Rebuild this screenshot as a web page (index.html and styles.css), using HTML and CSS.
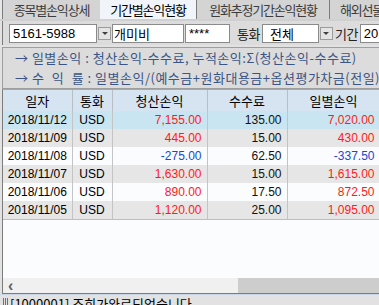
FILE: index.html
```html
<html>
<head>
  <title>기간별손익현황</title>
  <link rel="stylesheet" href="styles.css">
</head>
<body>
  <div class="tabs">
    <div class="tab tab1">종목별손익상세</div>
    <div class="tab active">기간별손익현황</div>
    <div class="tab tab3">원화추정기간손익현황</div>
    <div class="tab tab4">해외선물옵션</div>
  </div>

  <div class="controls">
    <div class="field acct">5161-5988</div>
    <div class="combo-btn"><span class="tri"></span></div>
    <div class="field name">개미비</div>
    <div class="field pw">****</div>
    <span class="label lbl-cur">통화</span>
    <div class="field cur">전체</div>
    <div class="combo-btn"><span class="tri"></span></div>
    <span class="label lbl-date">기간</span>
    <div class="field date">2018/11/05</div>
  </div>

  <div class="formula">
    <div class="line">→ 일별손익 : 청산손익-수수료, 누적손익:Σ(청산손익-수수료)</div>
    <div class="line">→ <span class="spread">수 익 률</span> : 일별손익/(예수금+원화대용금+옵션평가차금(전일))</div>
  </div>

  <div class="grid">
    <table>
      <colgroup>
        <col class="c-date"><col class="c-cur"><col class="c-pl"><col class="c-fee"><col class="c-day">
      </colgroup>
      <thead>
        <tr><th>일자</th><th>통화</th><th>청산손익</th><th>수수료</th><th>일별손익</th></tr>
      </thead>
      <tbody>
        <tr class="sel"><td class="ctr">2018/11/12</td><td class="ctr">USD</td><td class="up">7,155.00</td><td class="num">135.00</td><td class="up">7,020.00</td></tr>
        <tr class="odd"><td class="ctr">2018/11/09</td><td class="ctr">USD</td><td class="up">445.00</td><td class="num">15.00</td><td class="up">430.00</td></tr>
        <tr><td class="ctr">2018/11/08</td><td class="ctr">USD</td><td class="down">-275.00</td><td class="num">62.50</td><td class="down">-337.50</td></tr>
        <tr class="odd"><td class="ctr">2018/11/07</td><td class="ctr">USD</td><td class="up">1,630.00</td><td class="num">15.00</td><td class="up">1,615.00</td></tr>
        <tr><td class="ctr">2018/11/06</td><td class="ctr">USD</td><td class="up">890.00</td><td class="num">17.50</td><td class="up">872.50</td></tr>
        <tr class="odd last"><td class="ctr">2018/11/05</td><td class="ctr">USD</td><td class="up">1,120.00</td><td class="num">25.00</td><td class="up">1,095.00</td></tr>
      </tbody>
    </table>
    <div class="empty"></div>
    <div class="hscroll">
      <span class="arrow">&lsaquo;</span>
      <div class="thumb"></div>
    </div>
  </div>

  <div class="status"><span class="grip"></span>[1000001] 조회가완료되었습니다</div>
</body>
</html>
```

FILE: styles.css
```css
body {
  margin: 0;
  width: 379px;
  height: 305px;
  overflow: hidden;
  background-color: #e2e2e2;
  font-family: "Liberation Sans", "Noto Sans CJK KR", sans-serif;
  font-size: 12px;
  color: #000;
}

/* tabs */
.tabs {
  display: flex;
  height: 19px;
  padding-left: 2px;
  background-color: #e6e6e6;
  border-bottom: 2px solid #d0d0d0;
  white-space: nowrap;
  overflow: hidden;
}

.tab {
  flex-shrink: 0;
  font-family: "Noto Sans CJK KR", sans-serif;
  font-size: 13px;
  line-height: 19px;
  text-align: center;
  background-color: #d4d4d4;
  color: #3c3c3c;
  border-left: 1px solid #7c7c7c;
  letter-spacing: -1.2px;
}

.tab1 { width: 97px; }
.tab3 { width: 132px; }
.tab4 { width: 60px; text-align: left; padding-left: 10px; }

.tab.active {
  width: 96px;
  background-color: #f1f5fa;
  color: #000;
  border-left: none;
}

/* controls row */
.controls {
  display: flex;
  align-items: center;
  height: 23px;
  padding: 1px 0 0 6px;
  background-color: #dcdcdc;
  border-left: 1px solid #7c7c7c;
  margin-left: 2px;
  white-space: nowrap;
  overflow: hidden;
}

.field {
  height: 17px;
  line-height: 17px;
  background-color: #fff;
  border: 1px solid #8a8a8a;
  padding-left: 3px;
  font-size: 13px;
  box-sizing: content-box;
  flex-shrink: 0;
}

.acct { width: 83px; }
.name { width: 69px; font-family: "Noto Sans CJK KR", sans-serif; padding-left: 1px; }
.pw { width: 40px; margin-left: 1px; }
.cur { font-family: "Noto Sans CJK KR", sans-serif; padding-left: 7px; width: 48px; }
.date { width: 40px; }

.combo-btn {
  width: 11px;
  height: 11px;
  margin: 0 1px;
  background-color: #e4e4e4;
  border: 1px solid #9c9c9c;
  display: flex;
  align-items: center;
  justify-content: center;
  flex-shrink: 0;
}

.tri {
  width: 0;
  height: 0;
  border-left: 3px solid transparent;
  border-right: 3px solid transparent;
  border-top: 3px solid #404040;
}

.label {
  font-family: "Noto Sans CJK KR", sans-serif;
  font-size: 13px;
  letter-spacing: -0.5px;
  color: #222;
  flex-shrink: 0;
}

.lbl-cur { margin: 0 2px 0 7px; }
.lbl-date { margin: 0 2px 0 1px; }

/* formula box */
.formula {
  height: 40px;
  margin: 2px 0 0 2px;
  padding-left: 12px;
  background-color: #dcdcdc;
  border: 1px solid #9e9e9e;
  border-right: none;
  font-family: "Noto Sans CJK KR", sans-serif;
  font-size: 13px;
  color: #3a5585;
  white-space: nowrap;
  overflow: hidden;
}

.line {
  height: 20px;
  line-height: 20px;
  letter-spacing: 0.5px;
}

.spread {
  word-spacing: 4px;
}

/* grid */
.grid {
  margin-left: 2px;
  height: 203px;
  border-left: 1px solid #7c7c7c;
  border-top: 1px solid #a8a8a8;
  border-bottom: 1px solid #7c7c7c;
  background-color: #fbfcfe;
  display: flex;
  flex-direction: column;
}

table {
  table-layout: fixed;
  border-collapse: collapse;
  width: 377px;
  font-size: 12px;
}

.c-date { width: 69px; }
.c-cur { width: 40px; }
.c-pl { width: 95px; }
.c-fee { width: 80px; }
.c-day { width: 93px; }

th {
  height: 21px;
  padding: 0;
  font-family: "Noto Sans CJK KR", sans-serif;
  font-size: 13px;
  font-weight: normal;
  background-color: #d6e3f1;
  border-right: 1px solid #b8bec6;
}

td {
  height: 18px;
  padding: 0 5px 0 0;
  text-align: right;
  border-right: 1px solid #c4c4c4;
  white-space: nowrap;
  overflow: hidden;
}

td.ctr {
  text-align: center;
  padding: 0;
}

tr.sel td { background-color: #c9e5f1; }
tr.odd td { background-color: #e6e6e6; }
tr.last td { border-bottom: 1px solid #bdbdbd; }

.up { color: #ff1a1a; }
.down { color: #1848d0; }
.num { color: #111; }

.empty { flex: 1; }

.hscroll {
  height: 15px;
  display: flex;
  align-items: center;
  background-color: #f0f0f0;
}

.arrow {
  width: 230px;
  padding-left: 5px;
  font-size: 16px;
  font-weight: bold;
  color: #606060;
  line-height: 15px;
}

.thumb {
  flex: 1;
  height: 15px;
  background-color: #cdcdcd;
}

/* status bar */
.status {
  border-top: 1px solid #c8d6e6;
  padding: 1px 0 0 3px;
  font-family: "Noto Sans CJK KR", sans-serif;
  font-size: 13px;
  line-height: 15px;
  white-space: nowrap;
  display: flex;
  align-items: center;
}

.grip {
  width: 6px;
  height: 12px;
  margin-right: 1px;
  background: repeating-linear-gradient(90deg, #707070 0 1px, #e2e2e2 1px 2px);
}
```
